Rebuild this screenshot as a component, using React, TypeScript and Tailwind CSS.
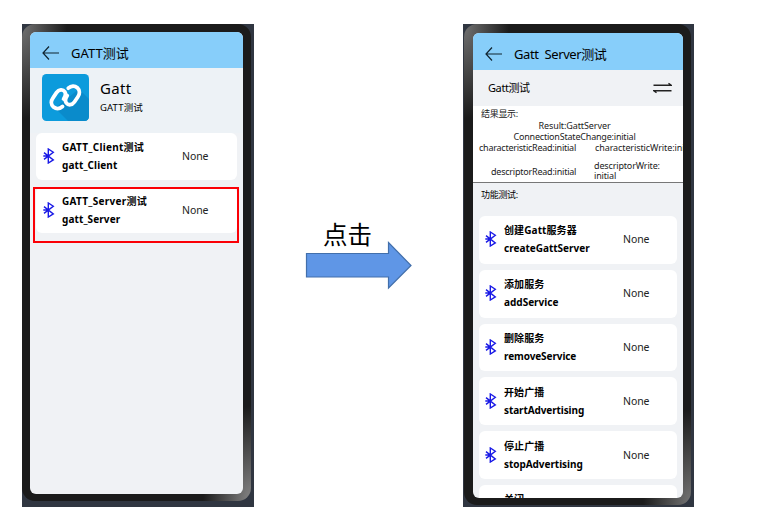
import React from "react";

function Bluetooth() {
  return (
    <svg width="12" height="16" viewBox="0 0 12 16" className="shrink-0" fill="none" stroke="#1a1ae6" strokeWidth="1.4">
      <path d="M1 4.6 L10.3 11.9 L5.3 15 V1 L10.3 4.2 L1 11.4 M0.3 8 H5" />
    </svg>
  );
}

function Back() {
  return (
    <svg width="18" height="14" viewBox="0 0 18 14" className="shrink-0" fill="none" stroke="#10242f" strokeWidth="1.2">
      <path d="M7 0.5 L1 7 L7 13.5 M1 7 H17" />
    </svg>
  );
}

function GattLogo() {
  return (
    <svg width="47" height="47" viewBox="0 0 47 47" className="shrink-0">
      <defs>
        <clipPath id="tile">
          <rect width="47" height="47" rx="4.5" />
        </clipPath>
      </defs>
      <g clipPath="url(#tile)">
        <rect width="47" height="47" fill="#0c9bdc" />
        <path d="M37 15 L47 25 V47 H26 L13 34 Z" fill="#0a8bcb" />
        <g fill="none" stroke="#fff" strokeWidth="3.8" strokeLinecap="round" strokeLinejoin="round">
          <path d="M20.5 32.5 C17.5 35 14 35 11.5 33 C8.6 30.4 8.8 26.8 11 23.8 L14.5 18.7 C17 15.2 20.8 14.8 22.8 17.8 C24.4 20.4 23.2 22.6 21.6 25" />
          <path d="M26.3 14.2 C29.2 11.6 32.8 11.6 35.3 13.7 C38.1 16.3 37.9 20 35.8 23 L32.4 28 C30 31.4 26.4 31.6 24.2 28.8 C22.6 26.4 23.6 24 25.2 21.6" />
        </g>
      </g>
    </svg>
  );
}

function Row({ title, sub, titleClass, subClass, card, textWidth }: { title: string; sub: string; titleClass: string; subClass: string; card: string; textWidth: string }) {
  return (
    <div className={"flex shrink-0 items-center rounded-[6px] bg-white pb-px text-black " + card}>
      <Bluetooth />
      <div className={"flex flex-col pl-[7px] text-[10px] leading-[18px] font-bold whitespace-nowrap " + textWidth}>
        <div>
          <span className={titleClass}>{title}</span>
        </div>
        <div>
          <span className={subClass}>{sub}</span>
        </div>
      </div>
      <span className="text-[10.5px] leading-[14px] tracking-[-0.1px] text-[#222]">None</span>
    </div>
  );
}

const serverRows = [
  { title: "创建Gatt服务器", sub: "createGattServer", t: "tracking-[0.1px]", s: "" },
  { title: "添加服务", sub: "addService", t: "tracking-[0.1px]", s: "" },
  { title: "删除服务", sub: "removeService", t: "tracking-[0.1px]", s: "tracking-[-0.1px]" },
  { title: "开始广播", sub: "startAdvertising", t: "tracking-[0.1px]", s: "tracking-[-0.1px]" },
  { title: "停止广播", sub: "stopAdvertising", t: "tracking-[0.1px]", s: "tracking-[-0.05px]" },
  { title: "关闭", sub: "close", t: "tracking-[0.1px]", s: "" },
];

const bezelLeft =
  "bg-[radial-gradient(ellipse_45px_95px_at_0_0,#727272,transparent),radial-gradient(ellipse_48px_95px_at_100%_100%,#858585,transparent)] bg-[#1b1b1b]";
const bezelRight =
  "bg-[radial-gradient(ellipse_45px_95px_at_0_0,#727272,transparent),radial-gradient(ellipse_48px_95px_at_100%_100%,#757575,transparent)] bg-[#1b1b1b]";

export default function App() {
  return (
    <div className="flex h-[523px] w-[781px] items-start overflow-hidden bg-white pt-[24px] pl-[22px] font-['Noto_Sans','Noto_Sans_CJK_SC',sans-serif] text-black">
      <div className="h-[483px] w-[232px] shrink-0 bg-[#303641]">
        <div className={"h-[477px] w-[229px] rounded-[13px] pt-[8px] pl-[8px] " + bezelLeft}>
          <div className="relative h-[462px] w-[213px] rounded-[6px] bg-[#f0f2f5]">
            <div className="flex h-[36px] items-center rounded-t-[6px] bg-[#87cefa] pt-[5px] pl-[12px]">
              <Back />
              <span className="ml-[11px] text-[13px] leading-[18px] tracking-[0.05px] whitespace-nowrap">GATT测试</span>
            </div>
            <div className="flex h-[65px] bg-[#edf2f6] pt-[6px] pl-[12px]">
              <GattLogo />
              <div className="flex flex-col pt-[4px] pl-[11px] whitespace-nowrap">
                <span className="text-[15px] leading-[20px] tracking-[0.3px]">Gatt</span>
                <span className="mt-[3px] text-[9.5px] leading-[14px] tracking-[0.15px]">GATT测试</span>
              </div>
            </div>
            <div className="flex flex-col gap-[7px] px-[6px]">
              <Row title="GATT_Client测试" sub="gatt_Client" titleClass="tracking-[0.28px]" subClass="tracking-[0.1px]" card="h-[47px] pl-[7px]" textWidth="w-[127px]" />
              <Row title="GATT_Server测试" sub="gatt_Server" titleClass="tracking-[0.28px]" subClass="tracking-[0.1px]" card="h-[46px] pl-[7px]" textWidth="w-[127px]" />
            </div>
            <div className="absolute top-[155px] left-[3px] h-[56px] w-[206px] border-2 border-[#fb0006]" />
          </div>
        </div>
      </div>

      <div className="flex w-[209px] shrink-0 flex-col pt-[193px] pl-[51px]">
        <span className="pl-[18px] font-['Noto_Sans_CJK_SC',sans-serif] text-[24.5px] leading-[33px] whitespace-nowrap">点击</span>
        <svg width="108" height="50" viewBox="0 0 108 50" className="mt-[-9px]">
          <path d="M1.5 12.5 H83.5 V1.5 L106 24.5 L83.5 47 V36 H1.5 Z" fill="#5f96e6" stroke="#426fab" strokeWidth="1.2" />
        </svg>
      </div>

      <div className="h-[483px] w-[231px] shrink-0 bg-[#303641]">
        <div className={"ml-[1px] h-[481px] w-[227px] rounded-[13px] pt-[9px] pl-[9px] " + bezelRight}>
          <div className="flex h-[465px] w-[210px] flex-col overflow-hidden rounded-[6px] bg-[#f0f2f5]">
            <div className="flex h-[37px] shrink-0 items-center bg-[#87cefa] pt-[5px] pl-[12px]">
              <Back />
              <span className="ml-[11px] text-[13px] leading-[18px] tracking-[-0.4px] whitespace-nowrap [word-spacing:3px]">Gatt Server测试</span>
            </div>
            <div className="flex h-[36px] shrink-0 items-center justify-between pr-[11px] pl-[15px]">
              <span className="text-[11px] leading-[16px] tracking-[-0.4px] whitespace-nowrap">Gatt测试</span>
              <svg width="19" height="12" viewBox="0 0 19 12" fill="none" stroke="#222" strokeWidth="1.4">
                <path d="M0.5 3.2 H18 L15.5 1.2 M18.5 8.8 H1 L3.5 10.8" />
              </svg>
            </div>
            <div className="h-[77px] shrink-0 overflow-hidden border-b border-[#777] bg-white text-[9px] leading-[11px] whitespace-nowrap text-[#222]">
              <div className="pt-[2px] pl-[8px] leading-[12px] tracking-[-0.3px]">结果显示:</div>
              <div className="pr-[7px] text-center leading-[11px] tracking-[-0.1px]">Result:GattServer</div>
              <div className="pr-[7px] text-center leading-[11px] tracking-[-0.2px]">ConnectionStateChange:initial</div>
              <div className="flex leading-[12px]">
                <span className="w-[122px] shrink-0 pl-[6px] tracking-[-0.24px]">characteristicRead:initial</span>
                <span className="shrink-0 tracking-[-0.1px]">characteristicWrite:initial</span>
              </div>
              <div className="flex h-[28px] items-center pt-[6px]">
                <span className="w-[103px] shrink-0 pl-[18px] tracking-[-0.22px]">descriptorRead:initial</span>
                <span className="pl-[18px] leading-[10px] tracking-[-0.15px]">
                  descriptorWrite:
                  <br />
                  initial
                </span>
              </div>
            </div>
            <div className="h-[33px] shrink-0 pt-[5px] pl-[8px] text-[9px] leading-[13px] tracking-[-0.3px]">功能测试:</div>
            <div className="flex flex-col gap-[6px] px-[6px]">
              {serverRows.map((r) => (
                <Row key={r.sub} title={r.title} sub={r.sub} titleClass={r.t} subClass={r.s} card="h-[47.8px] pl-[6px]" textWidth="w-[126px]" />
              ))}
            </div>
          </div>
        </div>
      </div>
    </div>
  );
}
